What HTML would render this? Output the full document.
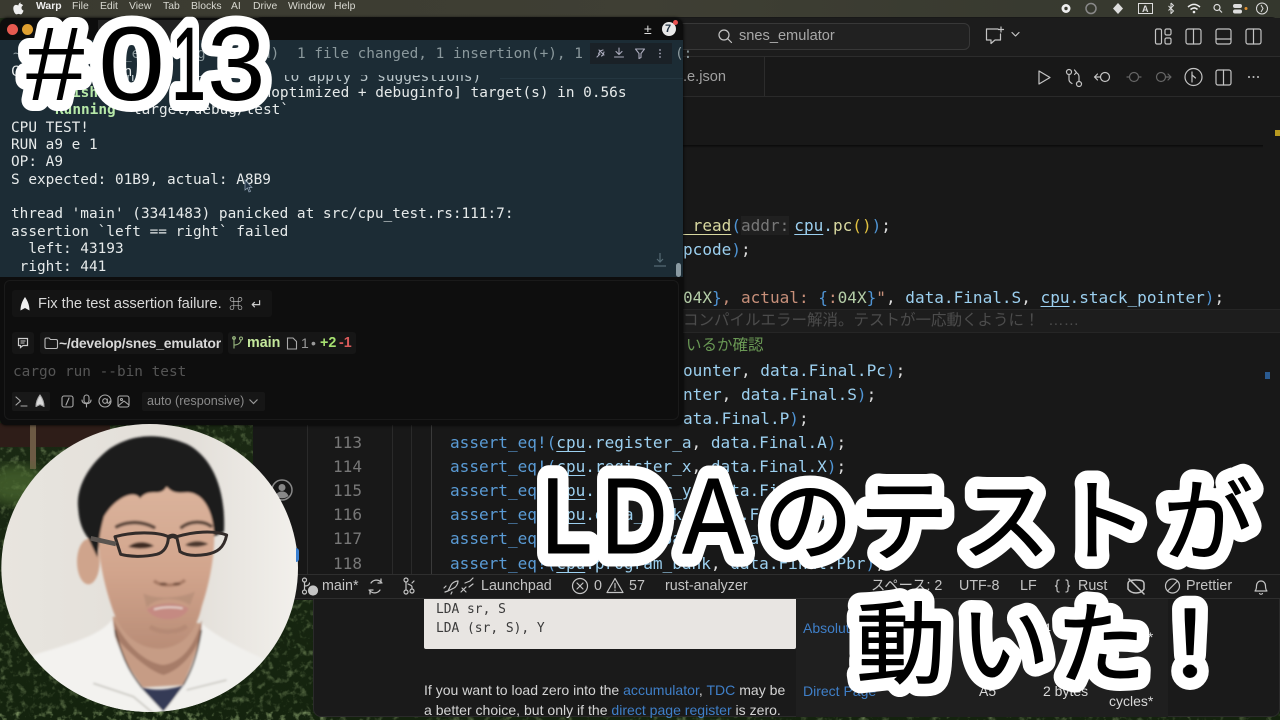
<!DOCTYPE html>
<html><head><meta charset="utf-8"><style>
*{margin:0;padding:0;box-sizing:border-box}
html,body{width:1280px;height:720px;overflow:hidden;background:#14200f}
body{position:relative;font-family:"Liberation Sans","Noto Sans CJK JP",sans-serif}
.a{position:absolute}
.t{position:absolute;white-space:pre;line-height:20px;height:20px}
.m{font-family:"DejaVu Sans Mono","Noto Sans CJK JP",monospace;font-size:14.4px;color:#e6eaea}
.c{font-family:"DejaVu Sans Mono","Noto Sans CJK JP",monospace;font-size:16.06px;color:#9cd0f0;left:0}
.s{font-size:14.3px;color:#c4c4c4}
.w{font-size:10.4px;color:#d8d8d0}
.kw{color:#5a9bd5}.y{color:#d8d8a0}.o{color:#c8907a}.g{color:#6a9955}.b{color:#4f94d4}.u{text-decoration:underline;text-underline-offset:3px}
svg{position:absolute;overflow:visible}
.ic{fill:none;stroke:#c4c4c4;stroke-width:1.2;stroke-linecap:round;stroke-linejoin:round}
.lk{color:#3f7fc8}
</style></head><body>

<!-- forest -->
<svg class="a" style="left:0;top:17px" width="1280" height="703" viewBox="0 0 1280 703">
<defs>
<filter id="leaf" x="0" y="0" width="100%" height="100%"><feTurbulence type="fractalNoise" baseFrequency=".15" numOctaves="3" seed="4"/><feColorMatrix values="0 0 0 0 .3  0 0 0 0 .42  0 0 0 0 .18  1.4 0 0 0 -.72"/></filter>
<filter id="bl"><feGaussianBlur stdDeviation="6"/></filter>
<linearGradient id="fg" x1="0" y1="0" x2="0" y2="1"><stop offset="0" stop-color="#22301a"/><stop offset="1" stop-color="#14230e"/></linearGradient>
</defs>
<rect width="1280" height="703" fill="url(#fg)"/>
<rect y="400" width="330" height="303" filter="url(#leaf)"/>
<rect x="0" y="406" width="110" height="24" fill="#2e1d18"/>
<rect x="30" y="406" width="6" height="46" fill="#6c5a44"/>
<ellipse cx="16" cy="468" rx="30" ry="20" fill="#4e6c30" opacity=".7" filter="url(#bl)"/>
<rect y="695" width="1280" height="8" filter="url(#leaf)"/>
</svg>

<!-- menu bar -->
<div class="a" style="left:0;top:0;width:1280px;height:18px;background:linear-gradient(90deg,#3a3a30,#3f3f34 50%,#34372d)"></div>
<svg style="left:13px;top:2px" width="11" height="13" viewBox="0 0 11 13"><path d="M7.6 0.5C6.6.6 5.7 1.5 5.8 2.8 6.9 2.8 7.8 1.8 7.6.5ZM5.5 3.4C4.8 3.4 4 2.9 3.1 2.9 1.6 2.9.3 4.2.3 6.4c0 2.6 1.7 6 3.2 6 .8 0 1.2-.5 2.1-.5s1.2.5 2.1.5c1.3 0 2.5-2.5 2.8-3.8-1.3-.5-2-1.5-2-2.7 0-1.1.6-2 1.6-2.5-.6-1-1.6-1.5-2.7-1.5-1 0-1.5.5-2 .5Z" fill="#eee"/></svg>
<div class="t w" style="left:36px;top:-3px;font-weight:bold;color:#eee">Warp</div>
<div class="t w" style="left:72px;top:-3px">File</div>
<div class="t w" style="left:100px;top:-3px">Edit</div>
<div class="t w" style="left:129px;top:-3px">View</div>
<div class="t w" style="left:163px;top:-3px">Tab</div>
<div class="t w" style="left:191px;top:-3px">Blocks</div>
<div class="t w" style="left:231px;top:-3px">AI</div>
<div class="t w" style="left:253px;top:-3px">Drive</div>
<div class="t w" style="left:288px;top:-3px">Window</div>
<div class="t w" style="left:334px;top:-3px">Help</div>
<svg style="left:1055px;top:0" width="225" height="18" viewBox="1055 0 225 18">
<circle cx="1066" cy="8.5" r="4.5" fill="#eee"/><circle cx="1066" cy="8.5" r="1.7" fill="#3a3a30"/>
<circle cx="1091" cy="8.5" r="5" fill="none" stroke="#888" stroke-width="1.5"/>
<path d="M1118 3l5 5.500-5 5.500-5-5.500z" fill="#ddd"/>
<rect x="1138.5" y="3.5" width="14" height="10" fill="none" stroke="#ddd" stroke-width="1"/>
<text x="1142" y="12" font-size="9" font-weight="bold" fill="#ddd" font-family="'Liberation Sans',sans-serif">A</text>
<path d="M1171 3v11m-2.500-8l5 5-2.500 2.500m0-10.500l2.500 2.500-5 5" fill="none" stroke="#ddd"/>
<path d="M1188 7c4-3.500 8-3.500 12 0m-9.500 2.500c2.500-2 5-2 7 0" fill="none" stroke="#eee" stroke-width="1.5"/><circle cx="1194" cy="12" r="1.3" fill="#eee"/>
<circle cx="1217" cy="7.5" r="3" fill="none" stroke="#ddd" stroke-width="1.2"/><path d="M1219.500 10l2.500 2.500" stroke="#ddd" stroke-width="1.2"/>
<rect x="1233" y="4" width="9" height="4" rx="2" fill="#ddd"/><rect x="1233" y="9.5" width="9" height="4" rx="2" fill="#ddd"/><circle cx="1246" cy="8.5" r="1.5" fill="#e09030"/>
<circle cx="1262" cy="8.5" r="5.5" fill="none" stroke="#ddd"/><path d="M1261 5l2 3.500-2 3.500" fill="none" stroke="#ddd"/>
</svg>

<!-- VS Code window -->
<div class="a" style="left:253px;top:17px;width:1027px;height:583px;background:#181818;border-radius:9px 9px 0 0"></div>
<div class="a" style="left:253px;top:18px;width:1027px;height:39px;background:#1c1c1c;border-bottom:1px solid #2c2c2c"></div>
<div class="a" style="left:600px;top:23px;width:370px;height:27px;background:#212121;border:1px solid #383838;border-radius:6px"></div>
<svg style="left:717px;top:28px" width="16" height="16" viewBox="0 0 16 16"><circle cx="7" cy="7" r="5" class="ic"/><path d="M10.5 10.5l4 4" class="ic"/></svg>
<div class="t" style="left:739px;top:26px;font-size:14.6px;color:#a8a8a8">snes_emulator</div>
<svg style="left:984px;top:26px" width="40" height="20" viewBox="0 0 40 20"><path d="M14 3H2.500v11H7v3.500l4-3.500h5.500V8M17 1v5M14.500 3.500h5" class="ic"/><path d="M28 6.500l3.500 3.500 3.500-3.500" class="ic" stroke-width="1"/></svg>
<svg style="left:1150px;top:26px" width="120" height="22" viewBox="1150 26 120 22">
<g class="ic"><rect x="1155.5" y="29" width="6" height="15" rx="1.5"/><rect x="1165" y="29" width="6" height="6" rx="1.5"/><rect x="1165" y="38" width="6" height="6" rx="1.5"/>
<rect x="1186" y="29" width="15" height="15" rx="2"/><path d="M1193.500 29v15"/>
<rect x="1216" y="29" width="15" height="15" rx="2"/><path d="M1216 39h15"/>
<rect x="1246" y="29" width="15" height="15" rx="2"/><path d="M1253.500 29v15"/></g></svg>
<div class="a" style="left:683px;top:57px;width:82px;height:40px;background:#1a1a1a;border-right:1px solid #2c2c2c"></div>
<div class="a" style="left:683px;top:96px;width:597px;height:1px;background:#2a2a2a"></div>
<div class="t" style="left:683px;top:67px;font-size:14.6px;color:#a0a0a0">.e.json</div>
<svg style="left:1030px;top:65px" width="240" height="24" viewBox="1030 65 240 24">
<g class="ic">
<path d="M1039 71v13l11-6.500z"/>
<circle cx="1069" cy="72" r="2.5"/><circle cx="1079" cy="84" r="2.5"/><path d="M1069 74.500v5c0 2 1 3 3 4M1079 81.500v-5c0-2-1-3-3-4M1074.500 70l2 2.500-2 2"/>
<circle cx="1105" cy="77" r="4.5"/><path d="M1100 77h-5m2.500-3l-3 3 3 3"/>
<g stroke="#666"><circle cx="1134" cy="77" r="4.5"/><path d="M1127 77h2.500m9 0h2.500"/><circle cx="1161" cy="77" r="4.5"/><path d="M1165.500 77h5m-2.500-3l3 3-3 3"/></g>
<circle cx="1193.5" cy="77" r="8.5"/><path d="M1192 72v10M1192 75l3.500 3"/>
<rect x="1216" y="70" width="15" height="15" rx="2"/><path d="M1223.500 70v15"/>
</g><g fill="#c4c4c4"><circle cx="1249" cy="77" r="1"/><circle cx="1253.5" cy="77" r="1"/><circle cx="1258" cy="77" r="1"/></g></svg>
<div class="a" style="left:683px;top:145px;width:580px;height:3px;background:linear-gradient(#0a0a0a,#181818)"></div>
<div class="a" style="left:1275px;top:130px;width:5px;height:6px;background:#b89a20"></div>
<div class="a" style="left:1265px;top:372px;width:5px;height:7px;background:#2a5a90"></div>
<div class="a" style="left:683px;top:309px;width:597px;height:24px;background:#1d1d1d;border-top:1px solid #262626;border-bottom:1px solid #262626"></div>

<!-- editor code -->
<div class="t c" style="left:683px;top:216px"><span class="y u">_read</span><span class="b">(</span><span style="color:#777;background:#202020">addr:</span><span class="u" style="margin-left:5px">cpu</span>.<span class="y">pc</span><span style="color:#e0c040">()</span><span class="b">)</span><span style="color:#ddd">;</span></div>
<div class="t c" style="left:683px;top:240px">pcode<span class="b">)</span><span style="color:#ddd">;</span></div>
<div class="t c" style="left:683px;top:288px"><span style="color:#b5cea8">04X</span><span class="b">}</span><span class="o">, actual: </span><span class="b">{</span><span class="o">:</span><span style="color:#b5cea8">04X</span><span class="b">}</span><span class="o">"</span><span style="color:#ddd">, </span>data.Final.S<span style="color:#ddd">, </span><span class="u">cpu</span>.stack_pointer<span class="b">)</span><span style="color:#ddd">;</span></div>
<div class="t" style="left:683px;top:311px;font-size:15.5px;color:#4c4c4c">コンパイルエラー解消。テストが一応動くように！  ……</div>
<div class="t g" style="left:686px;top:336px;font-size:15.5px">いるか確認</div>
<div class="t c" style="left:683px;top:361px">ounter<span style="color:#ddd">, </span>data.Final.Pc<span class="b">)</span><span style="color:#ddd">;</span></div>
<div class="t c" style="left:683px;top:385px">nter<span style="color:#ddd">, </span>data.Final.S<span class="b">)</span><span style="color:#ddd">;</span></div>
<div class="t c" style="left:683px;top:409px">ata.Final.P<span class="b">)</span><span style="color:#ddd">;</span></div>

<!-- sidebar + gutter -->
<div class="a" style="left:253px;top:424px;width:55px;height:150px;background:#171717;border-right:1px solid #2a2a2a"></div>
<svg style="left:271px;top:479px" width="22" height="22" viewBox="0 0 22 22"><circle cx="11" cy="11" r="10" fill="none" stroke="#888" stroke-width="1.5"/><circle cx="11" cy="8.5" r="3.5" fill="#888"/><path d="M4.500 17c1.500-3.500 3.500-4.500 6.500-4.500s5 1 6.500 4.500c-3.500 3-9.500 3-13 0z" fill="#888"/></svg>
<div class="a" style="left:392px;top:424px;width:1px;height:150px;background:#2a2a2a"></div>
<div class="a" style="left:411px;top:424px;width:1px;height:150px;background:#2a2a2a"></div>
<div class="a" style="left:431px;top:424px;width:1px;height:150px;background:#3a3a3a"></div>
<div class="t c" style="left:333px;top:433px;color:#777">113</div>
<div class="t c" style="left:333px;top:457px;color:#777">114</div>
<div class="t c" style="left:333px;top:481px;color:#777">115</div>
<div class="t c" style="left:333px;top:505px;color:#777">116</div>
<div class="t c" style="left:333px;top:529px;color:#777">117</div>
<div class="t c" style="left:333px;top:554px;color:#777">118</div>
<div class="t c" style="left:450px;top:433px"><span class="kw">assert_eq!(</span><span class="u">cpu</span>.register_a<span style="color:#ddd">, </span>data.Final.A<span class="b">)</span><span style="color:#ddd">;</span></div>
<div class="t c" style="left:450px;top:457px"><span class="kw">assert_eq!(</span><span class="u">cpu</span>.register_x<span style="color:#ddd">, </span>data.Final.X<span class="b">)</span><span style="color:#ddd">;</span></div>
<div class="t c" style="left:450px;top:481px"><span class="kw">assert_eq!(</span><span class="u">cpu</span>.register_y<span style="color:#ddd">, </span>data.Final.Y<span class="b">)</span><span style="color:#ddd">;</span></div>
<div class="t c" style="left:450px;top:505px"><span class="kw">assert_eq!(</span><span class="u">cpu</span>.data_bank<span style="color:#ddd">, </span>data.Final.Dbr<span class="b">)</span><span style="color:#ddd">;</span></div>
<div class="t c" style="left:450px;top:529px"><span class="kw">assert_eq!(</span><span class="u">cpu</span>.direct_page<span style="color:#ddd">, </span>data.Final.D<span class="b">)</span><span style="color:#ddd">;</span></div>
<div class="t c" style="left:450px;top:554px"><span class="kw">assert_eq!(</span><span class="u">cpu</span>.program_bank<span style="color:#ddd">, </span>data.Final.Pbr<span class="b">)</span><span style="color:#ddd">;</span></div>

<!-- browser window below -->
<div class="a" style="left:313px;top:598px;width:967px;height:119px;background:#1a1a1a;border:1px solid #2a2a2a;border-radius:0 0 8px 8px"></div>
<div class="a" style="left:796px;top:598px;width:372px;height:119px;background:#1f1f1f"></div>
<div class="a" style="left:424px;top:598px;width:372px;height:51px;background:#e8e5e2;border-radius:0 0 2px 2px"></div>
<div class="t" style="left:436px;top:600px;font-family:'DejaVu Sans Mono',monospace;font-size:12.9px;color:#3a3a3a">LDA sr, S</div>
<div class="t" style="left:436px;top:619px;font-family:'DejaVu Sans Mono',monospace;font-size:12.9px;color:#3a3a3a">LDA (sr, S), Y</div>
<div class="t" style="left:424px;top:680px;font-size:14.05px;color:#d4d4d4">If you want to load zero into the <span class="lk">accumulator</span>, <span class="lk">TDC</span> may be</div>
<div class="t" style="left:424px;top:700px;font-size:14.05px;color:#d4d4d4">a better choice, but only if the <span class="lk">direct page register</span> is zero.</div>
<div class="t" style="left:803px;top:618px;font-size:14px"><span class="lk">Absolute</span></div>
<div class="t" style="left:803px;top:681px;font-size:14px"><span class="lk">Direct Page</span></div>
<div class="t" style="left:979px;top:681px;font-size:14px;color:#d8d8d8">A5</div>
<div class="t" style="left:1043px;top:681px;font-size:14px;color:#d8d8d8">2 bytes</div>
<div class="t" style="left:1043px;top:618px;font-size:14px;color:#d8d8d8">4 bytes</div>
<div class="t" style="left:1109px;top:691px;font-size:14px;color:#d8d8d8">cycles*</div>
<div class="t" style="left:1109px;top:627px;font-size:14px;color:#d8d8d8">cycles*</div>

<!-- status bar -->
<div class="a" style="left:253px;top:574px;width:1027px;height:25px;background:#1a1a1a;border-top:1px solid #2e2e2e;border-bottom:1px solid #2e2e2e"></div>
<svg style="left:300px;top:576px" width="990" height="22" viewBox="300 576 990 22"><g class="ic">
<circle cx="304.5" cy="580" r="2"/><circle cx="304.5" cy="592" r="2"/><path d="M304.500 582v8M304.500 586c3 0 5-1 5-3"/><circle cx="313" cy="590.5" r="4.5" fill="#c4c4c4"/>
<path d="M371 583a6.500 6.500 0 0 1 10-1l1 1M380 590a6.500 6.500 0 0 1-10 1l-1-1M381 579v4h-3M370 594v-4h3"/>
<circle cx="406" cy="580" r="2"/><circle cx="406" cy="592" r="2"/><path d="M406 582v8M408 584c2 1 4 1 4 3v2"/><circle cx="412" cy="591" r="2"/><path d="M414 581l-2 2"/>
<path d="M445 592l3-1 3-6c1-2 4-4 7-4 0 3-2 6-4 7l-6 3zM446 586l-2 2M452 592l-1 2"/>
<path d="M461 592l5-5M465 583l5-2 3-3M469 587l4-3M462 588l4 4"/>
<circle cx="580" cy="586" r="7.5"/><path d="M577 583l6 6m0-6l-6 6"/>
<path d="M615 578.500l8 14h-16zM615 583.500v4.500M615 590v.5"/>
<path d="M1059 580c-2 0-2 1-2 3s0 2.500-1.500 3c1.500.5 1.500 1 1.500 3s0 3 2 3M1066 580c2 0 2 1 2 3s0 2.500 1.500 3c-1.500.5-1.500 1-1.500 3s0 3-2 3"/>
<path d="M1128 584c0-3 2-4 8-4s8 1 8 4v5c-2 3-5 4-8 4s-6-1-8-4zM1129 579l15 15" stroke-width="1.5"/>
<circle cx="1172.5" cy="586" r="7"/><path d="M1167.500 591l10-10"/>
<path d="M1255 591c1.500-1.500 1.500-3 1.500-5 0-3 2-5 4.500-5s4.500 2 4.500 5c0 2 0 3.500 1.500 5zM1259.500 593.500c.5 1 2.500 1 3 0"/>
</g></svg>
<div class="t s" style="left:322px;top:576px">main*</div>
<div class="t s" style="left:481px;top:576px">Launchpad</div>
<div class="t s" style="left:594px;top:576px">0</div>
<div class="t s" style="left:629px;top:576px">57</div>
<div class="t s" style="left:665px;top:576px">rust-analyzer</div>
<div class="t s" style="left:871px;top:576px">スペース: 2</div>
<div class="t s" style="left:959px;top:576px">UTF-8</div>
<div class="t s" style="left:1020px;top:576px">LF</div>
<div class="t s" style="left:1078px;top:576px">Rust</div>
<div class="t s" style="left:1186px;top:576px">Prettier</div>

<!-- Warp window -->
<div class="a" style="left:0;top:18px;width:683px;height:407px;background:#0d0d0d;border-radius:8px 8px 6px 6px;box-shadow:0 0 3px #000"></div>
<div class="a" style="left:0;top:40px;width:683px;height:237px;background:#1c2c35"></div>
<div class="a" style="left:98px;top:20px;width:130px;height:20px;background:#222"></div>
<div class="a" style="left:7px;top:24px;width:11px;height:11px;border-radius:50%;background:#e85a50"></div>
<div class="a" style="left:22px;top:24px;width:11px;height:11px;border-radius:50%;background:#e0a030"></div>
<div class="t" style="left:644px;top:19px;color:#ddd;font-size:14px">±</div>
<div class="a" style="left:662px;top:22px;width:14px;height:14px;border-radius:50%;background:#e8e8e8"></div>
<div class="t" style="left:665px;top:19px;color:#234;font-size:11px;font-weight:bold">7</div>
<div class="a" style="left:673px;top:20px;width:5px;height:5px;border-radius:50%;background:#e85050"></div>
<div class="t m" style="left:13px;top:44px;color:#8a989c">~</div>
<div class="t m" style="left:123px;top:44px;color:#8a989c">_e</div>
<div class="t m" style="left:197px;top:44px;color:#8a989c">g</div>
<div class="t m" style="left:262px;top:44px;color:#8a989c">n)</div>
<div class="t m" style="left:297px;top:44px;color:#8a989c">1 file changed, 1 insertion(+), 1 del</div>
<div class="t m" style="left:675px;top:44px;color:#8a989c">(:</div>
<div class="a" style="left:590px;top:43px;width:82px;height:21px;background:#1a2127"></div>
<svg style="left:594px;top:46px" width="76" height="16" viewBox="594 46 76 16"><g fill="none" stroke="#aab" stroke-width="1.1" stroke-linecap="round" stroke-linejoin="round">
<path d="M597 57l3-3m-1-4l5 5m-1-5l-3 1-1.500 3M604 52l-1 3-1.500 1"/>
<path d="M619 48v6m-3-2.500l3 3 3-3M614.500 57h9"/>
<path d="M635.500 49h9l-3.500 4.500v4l-2 1v-5z"/>
</g><g fill="#aab"><circle cx="660" cy="50" r=".9"/><circle cx="660" cy="53.5" r=".9"/><circle cx="660" cy="57" r=".9"/></g></svg>
<div class="t m" style="left:11px;top:62px">C</div>
<div class="t m" style="left:115px;top:62px">in</div>
<div class="t m" style="left:100px;top:67px;clip-path:inset(8px 0 0 0);color:#b8c4c8">warning: `cargo fix` to apply 5 suggestions)</div>
<div class="a" style="left:500px;top:78px;width:183px;height:1px;background:#243640"></div>
<div class="t m" style="left:46px;top:83px"><span style="color:#b6e8a8;font-weight:bold">Finished</span> `dev` profile [unoptimized + debuginfo] target(s) in 0.56s</div>
<div class="t m" style="left:55px;top:100px"><span style="color:#b6e8a8;font-weight:bold">Running</span> `target/debug/test`</div>
<div class="t m" style="left:11px;top:118px">CPU TEST!</div>
<div class="t m" style="left:11px;top:135px">RUN a9 e 1</div>
<div class="t m" style="left:11px;top:152px">OP: A9</div>
<div class="t m" style="left:11px;top:170px">S expected: 01B9, actual: A8B9</div>
<div class="t m" style="left:11px;top:204px">thread 'main' (3341483) panicked at src/cpu_test.rs:111:7:</div>
<div class="t m" style="left:11px;top:222px">assertion `left == right` failed</div>
<div class="t m" style="left:11px;top:239px">  left: 43193</div>
<div class="t m" style="left:11px;top:257px"> right: 441</div>
<svg style="left:244px;top:180px" width="10" height="13" viewBox="0 0 10 13"><path d="M1 0v10l2.500-2 1.500 4 1.500-.7-1.500-3.800h3z" fill="#234" stroke="#9ab" stroke-width=".7"/></svg>
<svg style="left:653px;top:252px" width="14" height="16" viewBox="0 0 14 16"><path d="M7 1v9M4 7l3 3 3-3M1 14h12" fill="none" stroke="#546a74" stroke-width="1.2"/></svg>
<div class="a" style="left:676px;top:263px;width:5px;height:14px;border-radius:3px;background:#8a9aa2"></div>

<!-- Warp input -->
<div class="a" style="left:4px;top:280px;width:675px;height:140px;background:#0e0e0e;border:1px solid #1a1a1a;border-radius:6px"></div>
<div class="a" style="left:12px;top:290px;width:260px;height:27px;background:#141414;border-radius:3px"></div>
<svg style="left:18px;top:296px" width="14" height="16" viewBox="0 0 14 16"><path d="M7 1C4.500 4.500 2.500 9 2.500 14.500L7 12l4.500 2.500C11.500 9 9.500 4.500 7 1z" fill="#eee"/></svg>
<div class="t" style="left:38px;top:294px;font-size:14.7px;color:#d8d8d8">Fix the test assertion failure.</div>
<div class="t" style="left:229px;top:294px;font-size:14px;color:#ccc">⌘</div>
<div class="t" style="left:251px;top:294px;font-size:14px;color:#ccc">↵</div>
<div class="a" style="left:12px;top:332px;width:22px;height:22px;background:#161616;border-radius:3px"></div>
<svg style="left:17px;top:337px" width="12" height="12" viewBox="0 0 12 12"><path d="M1.500 1.500h9v7H6l-2.500 2V8.500h-2z" fill="none" stroke="#ccc" stroke-width="1.2"/><path d="M3.500 4h5M3.500 6h4" stroke="#ccc"/></svg>
<div class="a" style="left:40px;top:332px;width:183px;height:22px;background:#161616;border-radius:3px"></div>
<svg style="left:44px;top:337px" width="14" height="12" viewBox="0 0 14 12"><path d="M1 2.500c0-1 .5-1.500 1.500-1.500H5l1.500 1.500h5.500c1 0 1.500.5 1.500 1.500v6c0 1-.5 1.500-1.500 1.500h-9.500C1.500 11.500 1 11 1 10z" fill="none" stroke="#bbb" stroke-width="1.1"/></svg>
<div class="t" style="left:59px;top:333px;font-size:14px;font-weight:bold;color:#d8d8d8;letter-spacing:-.25px">~/develop/snes_emulator</div>
<div class="a" style="left:228px;top:332px;width:128px;height:22px;background:#161616;border-radius:3px"></div>
<svg style="left:231px;top:336px" width="14" height="14" viewBox="0 0 14 14"><path d="M3 1.500v11M3 9c4 0 7-2 7-5.500" fill="none" stroke="#9ab880" stroke-width="1.1"/><circle cx="10" cy="2.500" r="1.5" fill="none" stroke="#9ab880"/><circle cx="3" cy="2" r="1.4" fill="none" stroke="#9ab880"/></svg>
<div class="t" style="left:247px;top:333px;font-size:14.3px;font-weight:bold;color:#c4e89c">main</div>
<svg style="left:286px;top:337px" width="12" height="13" viewBox="0 0 12 13"><path d="M1.500 1h5.500l3.500 3.500v7.500h-9z" fill="none" stroke="#aaa" stroke-width="1.1"/></svg>
<div class="t" style="left:301px;top:333px;font-size:14px;color:#999">1</div>
<div class="t" style="left:311px;top:333px;font-size:14px;color:#999">•</div>
<div class="t" style="left:320px;top:333px;font-size:14.3px;font-weight:bold;color:#a6e070">+2</div>
<div class="t" style="left:339px;top:333px;font-size:14.3px;font-weight:bold;color:#d85a5a">-1</div>
<div class="t m" style="left:13px;top:362px;color:#555">cargo run --bin test</div>
<div class="a" style="left:12px;top:392px;width:38px;height:19px;background:#181818;border-radius:2px"></div>
<div class="a" style="left:142px;top:392px;width:123px;height:19px;background:#161616;border-radius:2px"></div>
<svg style="left:15px;top:393px" width="115" height="17" viewBox="15 393 115 17"><g fill="none" stroke="#aaa" stroke-width="1.1" stroke-linecap="round" stroke-linejoin="round">
<path d="M16 397l4.500 4-4.500 4M21 406h6"/>
<path d="M40 395c-2.500 3.500-4 7-4 11.500L40 404.500l4 2C44 402 42.500 398.500 40 395z" fill="#ddd"/>
<rect x="62" y="396" width="11" height="11" rx="2"/><path d="M66 405l3-7"/>
<rect x="84" y="395" width="5" height="8" rx="2.5"/><path d="M82 400c0 5 9 5 9 0M86.500 404v3"/>
<circle cx="105" cy="401" r="6"/><circle cx="105" cy="401" r="2.3"/><path d="M107.300 399v3c0 2 2.700 1.500 2.700-1"/>
<rect x="118" y="396" width="11" height="11" rx="2"/><circle cx="121.5" cy="399.5" r="1"/><path d="M118 406l6-5 5 4"/>
</g></svg>
<div class="t" style="left:147px;top:391px;font-size:12.6px;color:#8a8a8a">auto (responsive)</div>
<svg style="left:248px;top:398px" width="11" height="8" viewBox="0 0 11 8"><path d="M1.500 1.500l4 4 4-4" fill="none" stroke="#999" stroke-width="1.2"/></svg>

<!-- portrait -->
<svg style="left:0;top:420px" width="310" height="300" viewBox="0 0 930 900">
<defs>
<clipPath id="cc"><ellipse cx="449" cy="444" rx="445" ry="432"/></clipPath>
<linearGradient id="wall" x1="0" y1="0" x2="1" y2="0"><stop offset="0" stop-color="#e8e5df"/><stop offset=".6" stop-color="#e2ded8"/><stop offset="1" stop-color="#f4f2ee"/></linearGradient>
<linearGradient id="skin" x1="0" y1="0" x2="0" y2="1"><stop offset="0" stop-color="#dcb59e"/><stop offset=".55" stop-color="#d2a58d"/><stop offset="1" stop-color="#b98d77"/></linearGradient>
<filter id="soft"><feGaussianBlur stdDeviation="3"/></filter>
</defs>
<g clip-path="url(#cc)">
<rect width="930" height="900" fill="url(#wall)"/>
<g filter="url(#soft)">
<path d="M338 590L345 650C370 720 400 770 425 802L550 795C580 740 600 680 605 610Z" fill="#c69c85"/>
<path d="M340 600C380 680 440 730 490 735 540 730 585 680 605 600V640C585 700 540 750 490 765 440 750 380 690 345 650Z" fill="#a67c68"/>
<path d="M100 705C180 680 300 650 335 600L345 650C370 730 430 810 490 875V900H100Z" fill="#f3f2ef"/>
<path d="M605 610C650 650 730 690 800 720L700 900H490V875C540 830 590 720 605 620Z" fill="#f1f0ed"/>
<path d="M280 790L400 830 460 880M560 810L680 780" fill="none" stroke="#c8c6c0" stroke-width="5"/>
<path d="M420 800C460 815 510 810 552 795L490 875Z" fill="#363b57"/>
<path d="M345 630C370 730 400 770 425 802M604 630C590 720 570 760 550 795" fill="none" stroke="#3a302c" stroke-width="4"/>
<ellipse cx="265" cy="425" rx="34" ry="68" fill="#cfa48c"/>
<path d="M290 300C310 220 370 170 450 165 540 160 620 210 640 300 650 380 632 480 605 560 592 620 560 682 480 686 410 686 360 640 335 560 312 490 295 420 290 300Z" fill="url(#skin)"/>
<path d="M235 270C225 200 270 130 330 85 400 40 480 38 560 72 632 108 678 200 672 335L642 350C642 290 620 240 590 225 560 205 530 235 500 200 480 235 450 200 420 235 400 205 340 240 312 290 304 320 300 340 298 360L292 412 265 355C245 330 237 300 235 270Z" fill="#1b1b1b"/>
<path d="M350 320C385 303 425 303 462 322M545 322C570 302 610 302 632 318" fill="none" stroke="#5e483d" stroke-width="11" stroke-linecap="round"/>
<path d="M385 380C405 362 440 362 462 378 440 388 405 388 385 380Z" fill="#3e2b24"/>
<path d="M555 375C575 360 605 360 625 372 605 382 575 384 555 375Z" fill="#4c372d"/>
<path d="M462 482C480 500 535 500 555 480" fill="none" stroke="#a87c66" stroke-width="10"/>
<ellipse cx="490" cy="492" rx="12" ry="5" fill="#7c5644"/><ellipse cx="530" cy="492" rx="12" ry="5" fill="#7c5644"/>
<path d="M440 568C480 545 530 545 566 565 550 605 470 612 440 568Z" fill="#c58a82"/>
<path d="M462 568C490 560 520 560 548 565" stroke="#e8dad3" stroke-width="5" fill="none"/>
<path d="M430 520C470 540 540 535 585 515L570 555C530 530 470 530 440 562Z" fill="#a98570" opacity=".5"/>
<path d="M450 620C480 640 530 640 560 618" stroke="#b58a74" stroke-width="14" fill="none"/>
</g>
<g fill="none" stroke="#332c2a" stroke-width="9" stroke-linejoin="round">
<path d="M345 350C400 335 470 335 505 350 505 380 490 398 470 403 430 412 390 410 362 403Z"/>
<path d="M530 350C580 335 640 330 680 345 672 385 650 398 620 403 590 408 560 408 540 395Z"/>
<path d="M505 352C515 346 522 346 530 352" stroke-width="14"/>
<path d="M272 355L348 372" stroke-width="14" stroke="#5a5450"/>
</g>
</g>
</svg>
<div class="a" style="left:296px;top:548px;width:3px;height:14px;background:#3a7fd0;border-radius:0 3px 3px 0"></div>

<!-- overlay titles -->
<svg style="left:0;top:0" width="1280" height="720" viewBox="0 0 1280 720">
<g font-family="'Liberation Sans',sans-serif" font-size="105" stroke-linejoin="round" stroke-linecap="round">
<g fill="#fff" stroke="#fff" stroke-width="22">
<text x="26" y="100">#</text><text transform="translate(98,100) scale(1.15,1)">0</text><text transform="translate(171,100) scale(.6,1)">1</text><text x="207" y="100">3</text>
</g>
<g fill="#000">
<text x="26" y="100">#</text><text transform="translate(98,100) scale(1.15,1)">0</text><text transform="translate(171,100) scale(.6,1)">1</text><text x="207" y="100">3</text>
</g>
</g>
<g font-family="'Liberation Sans',sans-serif" font-size="108" stroke-linejoin="round">
<text transform="scale(.85,1)" x="636.5 707 803" y="553" fill="#fff" stroke="#fff" stroke-width="27">LDA</text>
<text transform="scale(.85,1)" x="636.5 707 803" y="553" fill="#000" stroke="#000" stroke-width="1">LDA</text>
</g>
<g font-family="'Noto Sans CJK JP',sans-serif" font-size="90" stroke-linejoin="round">
<text x="763 859 961 1058 1163" y="553" fill="#fff" stroke="#fff" stroke-width="26">のテストが</text>
<text x="763 859 961 1058 1163" y="553" fill="#000" stroke="#000" stroke-width="1">のテストが</text>
<text x="856 960 1056 1145" y="676" fill="#fff" stroke="#fff" stroke-width="26">動いた！</text>
<text x="856 960 1056 1145" y="676" fill="#000" stroke="#000" stroke-width="1">動いた！</text>
</g>
</svg>
</body></html>
